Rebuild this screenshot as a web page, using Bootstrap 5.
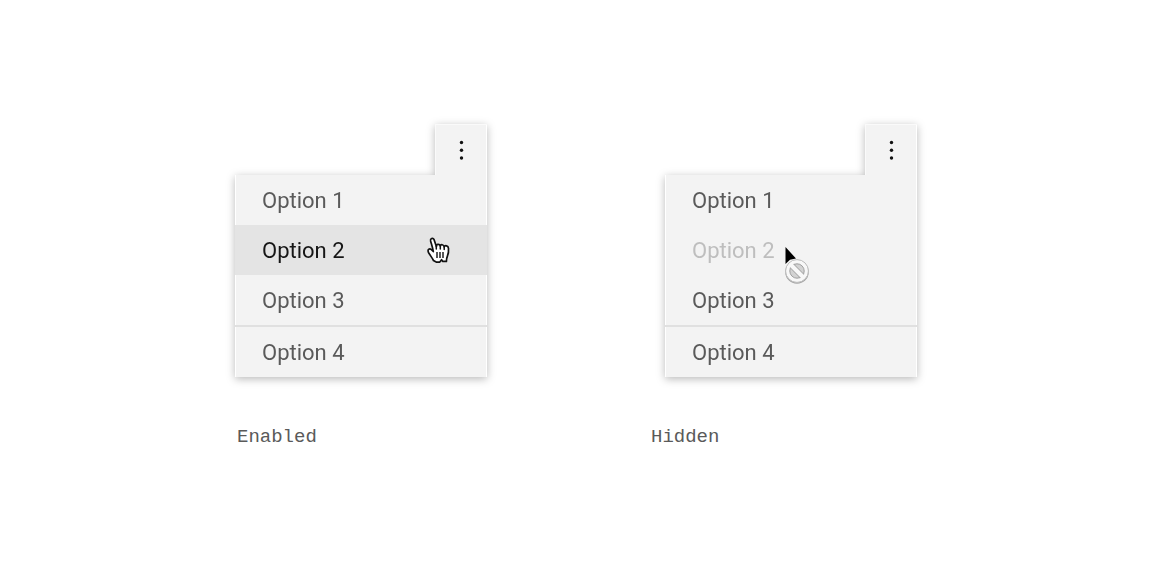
<!DOCTYPE html>
<html lang="en">
<head>
<meta charset="utf-8">
<meta name="viewport" content="width=device-width, initial-scale=1">
<title>Overflow menu states</title>
<link href="https://cdn.jsdelivr.net/npm/bootstrap@5.3.0/dist/css/bootstrap.min.css" rel="stylesheet">
<style>
  body { background: #fff; font-family: Roboto, "Liberation Sans", sans-serif; }
  .demo-grid { padding-top: 124px; padding-bottom: 48px; column-gap: 164px; row-gap: 48px; }
  .overflow-demo { width: 252px; filter: drop-shadow(0 2px 4px rgba(0,0,0,.28)); }
  .demo-hidden .overflow-demo { margin-left: 14px; }
  .menu-trigger { width: 52px; height: 51px; background: #f3f3f3; box-shadow: inset 1px 1px #fafafa, inset -1px 0 #fff; }
  .menu-options { background: #f3f3f3; box-shadow: inset 1px 0 #fff, inset -1px 0 #fff; }
  .menu-option { height: 50px; padding: 2px 27px 0; font-size: 22px; line-height: 48px; color: #5a5a5a; background: transparent; }
  .menu-option.is-hovered { color: #161616; background: #e4e4e4; }
  .menu-option:disabled { color: #bebebe; }
  .menu-divider { border-top: 2px solid #e0e0e0; }
  .demo-caption { font-family: "Liberation Mono", monospace; font-size: 19px; line-height: 24px; color: #5a5a5a; margin-top: 48px; }
  .demo-enabled .demo-caption { padding-left: 2px; }
  .pointer-hand { top: 11px; right: 34px; }
  .pointer-blocked { top: 19px; left: 119px; }
</style>
</head>
<body>
<main class="demo-grid d-flex flex-wrap justify-content-center align-items-start">
  <figure class="demo-enabled m-0">
    <div class="overflow-demo d-flex flex-column">
      <button type="button" class="menu-trigger btn border-0 rounded-0 p-0 ms-auto d-flex align-items-center justify-content-center" aria-label="Options" aria-expanded="true">
        <svg width="6" height="20" viewBox="0 0 6 20" fill="#111" aria-hidden="true"><circle cx="3.500" cy="2.500" r="1.700"/><circle cx="3.500" cy="10.200" r="1.700"/><circle cx="3.500" cy="18" r="1.700"/></svg>
      </button>
      <ul class="menu-options list-unstyled m-0">
        <li><button type="button" class="menu-option w-100 border-0 text-start d-block">Option 1</button></li>
        <li class="position-relative">
          <button type="button" class="menu-option is-hovered w-100 border-0 text-start d-block">Option 2</button>
          <svg class="pointer-hand position-absolute pe-none" width="28" height="30" viewBox="0 0 28 30" aria-hidden="true">
            <path d="M8.500 24.500C7 21.500 5.500 20 3.500 16.500C2.500 14.500 3.200 12.800 5 12.900C6.300 13 7.200 14.300 8.300 15.500C7.800 12 6.500 8.300 5.600 5C5 2.500 7.900 1.300 9 3.400L11.400 10.500C11.200 7.900 14.600 7.700 15.300 10C15.700 8 18.800 8.400 19.200 10.800C20 9 23.200 9.500 23.500 12.300C23.800 15.500 23.400 17.700 22.400 20.100C21.800 21.500 21.400 22.500 21.400 25.400H17.800L16.600 23.700L14.800 26.100H11.200C10.400 25.700 9.500 25.200 8.500 24.500Z" fill="#fff" stroke="#111" stroke-width="1.700" stroke-linejoin="round"/>
            <path d="M11.300 10v3M15.300 10v3M19.200 11v2.500" stroke="#111" stroke-width="1.500" stroke-linecap="round"/>
            <path d="M12 16v6M15 16v6M18 16v6" stroke="#111" stroke-width="1.400"/>
          </svg>
        </li>
        <li><button type="button" class="menu-option w-100 border-0 text-start d-block">Option 3</button></li>
        <li class="menu-divider"><button type="button" class="menu-option w-100 border-0 text-start d-block">Option 4</button></li>
      </ul>
    </div>
    <figcaption class="demo-caption">Enabled</figcaption>
  </figure>

  <figure class="demo-hidden m-0">
    <div class="overflow-demo d-flex flex-column">
      <button type="button" class="menu-trigger btn border-0 rounded-0 p-0 ms-auto d-flex align-items-center justify-content-center" aria-label="Options" aria-expanded="true">
        <svg width="6" height="20" viewBox="0 0 6 20" fill="#111" aria-hidden="true"><circle cx="3.500" cy="2.500" r="1.700"/><circle cx="3.500" cy="10.200" r="1.700"/><circle cx="3.500" cy="18" r="1.700"/></svg>
      </button>
      <ul class="menu-options list-unstyled m-0">
        <li><button type="button" class="menu-option w-100 border-0 text-start d-block">Option 1</button></li>
        <li class="position-relative">
          <button type="button" class="menu-option w-100 border-0 text-start d-block" disabled>Option 2</button>
          <svg class="pointer-blocked position-absolute pe-none" width="28" height="42" viewBox="0 0 28 42" aria-hidden="true">
            <path d="M1.500 3V20L6 15.800L12 14.500Z" fill="#000"/>
            <circle cx="13" cy="28" r="11.800" fill="#a5a5a5"/>
            <circle cx="13" cy="27" r="11.400" fill="#f8f8f8" stroke="#bbb" stroke-width="1"/>
            <circle cx="13" cy="27" r="7.200" fill="#d2d2d2" stroke="#a0a0a0" stroke-width="1"/>
            <path d="M7.800 21.800L18.200 32.200" stroke="#a0a0a0" stroke-width="5.800"/>
            <path d="M7 21L19 33" stroke="#f8f8f8" stroke-width="4.200"/>
          </svg>
        </li>
        <li><button type="button" class="menu-option w-100 border-0 text-start d-block">Option 3</button></li>
        <li class="menu-divider"><button type="button" class="menu-option w-100 border-0 text-start d-block">Option 4</button></li>
      </ul>
    </div>
    <figcaption class="demo-caption">Hidden</figcaption>
  </figure>
</main>
<script src="https://cdn.jsdelivr.net/npm/bootstrap@5.3.0/dist/js/bootstrap.bundle.min.js"></script>
</body>
</html>
